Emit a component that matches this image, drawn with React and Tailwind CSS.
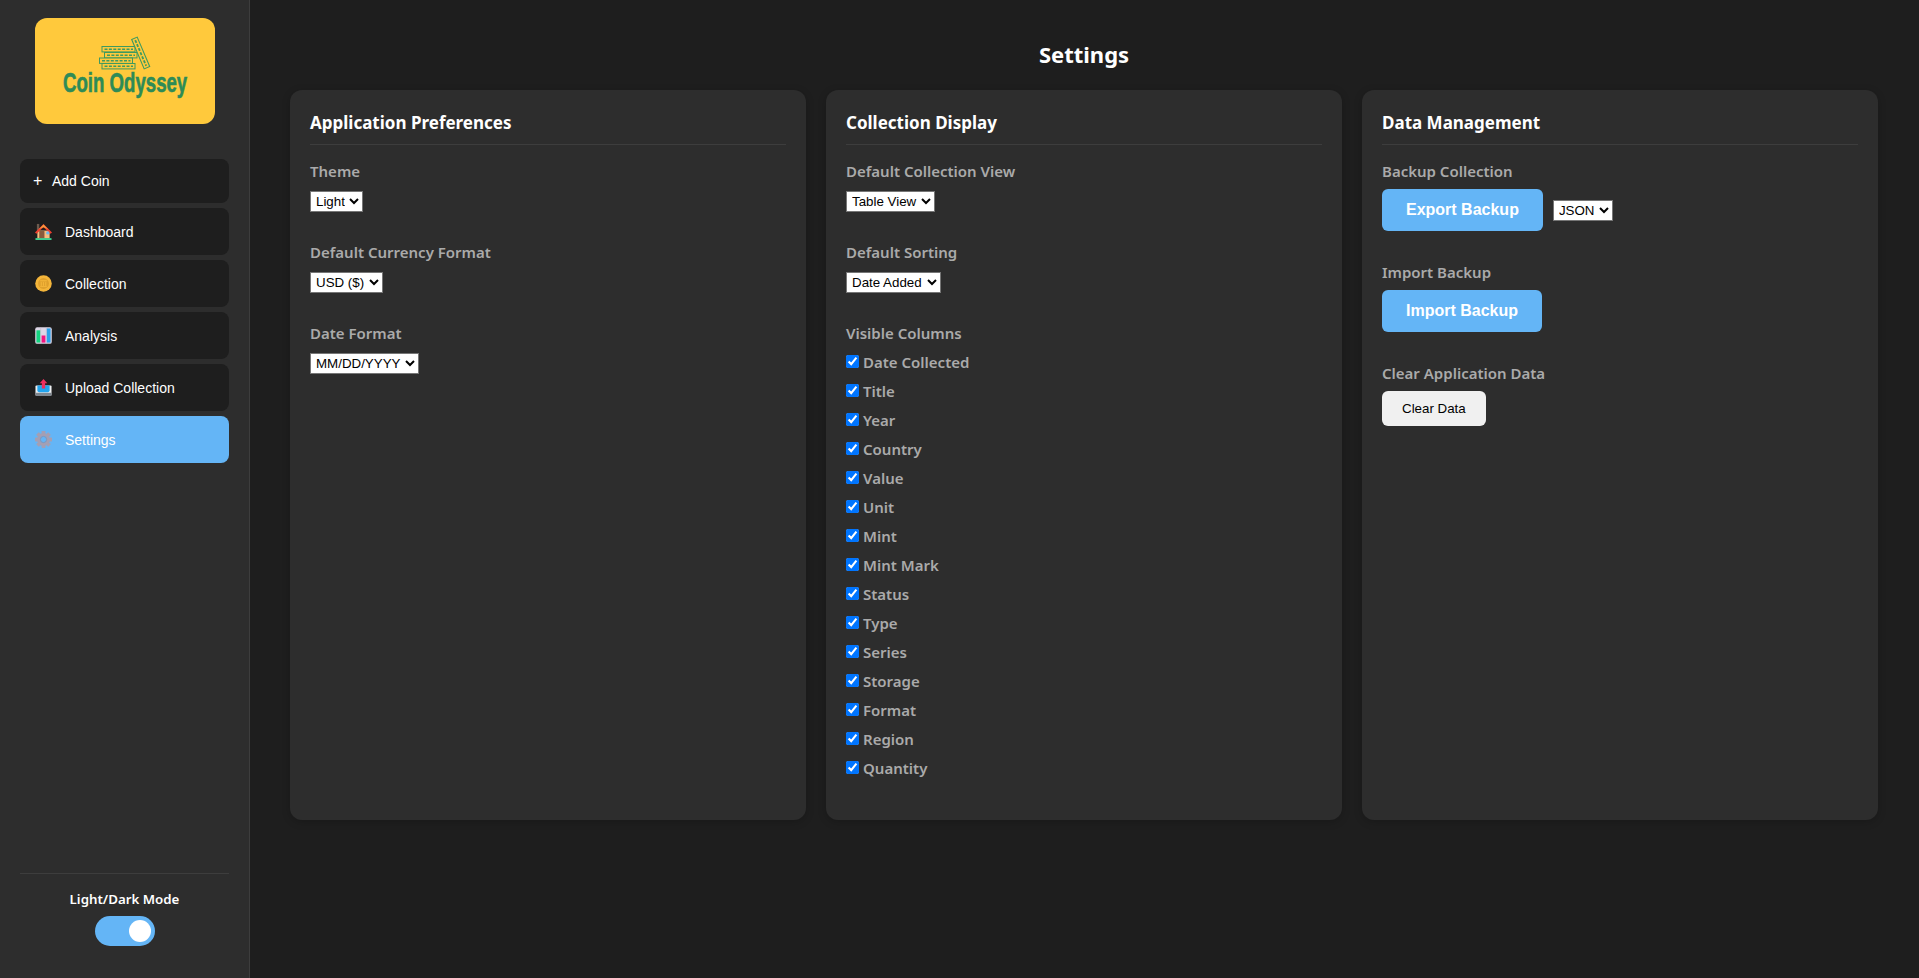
import { useState } from "react";

const HomeIcon = () => (
	<svg width="17" height="17" viewBox="0 0 36 36">
		<rect x="4" y="2" width="5" height="14" fill="#6b5a4e" />
		<rect x="5" y="16" width="26" height="17" fill="#f7bd7e" />
		<path d="M18 2 L0 20 L3 23 L18 9 L33 23 L36 20 Z" fill="#ef3f2f" />
		<path d="M18 3 L8 13 L18 9 L28 13 Z" fill="#f59a3b" />
		<rect x="9" y="17" width="11" height="16" fill="#8a5a3c" />
		<circle cx="27" cy="21" r="3.5" fill="#6db9ee" />
		<rect x="1" y="32" width="34" height="4" fill="#3fcf8e" />
	</svg>
);

const CoinIcon = () => (
	<svg width="17" height="17" viewBox="0 0 36 36">
		<circle cx="18" cy="18" r="17.5" fill="#f4b53a" />
		<circle cx="18" cy="18" r="11.5" fill="#dfa02c" />
		<rect x="11" y="11" width="14" height="2.5" fill="#f4b53a" />
		<rect x="12" y="15" width="2.5" height="8" fill="#f4b53a" />
		<rect x="16.7" y="15" width="2.5" height="8" fill="#f4b53a" />
		<rect x="21.5" y="15" width="2.5" height="8" fill="#f4b53a" />
		<rect x="11" y="23.5" width="14" height="2" fill="#f4b53a" />
	</svg>
);

const ChartIcon = () => (
	<svg width="17" height="17" viewBox="0 0 36 36">
		<rect x="0.5" y="0.5" width="35" height="35" rx="4" fill="#ddd6e6" />
		<path d="M12 0 V36 M24 0 V36" stroke="#bdb5c9" strokeWidth="1" />
		<rect x="3" y="7" width="8" height="26" fill="#14d37f" />
		<rect x="14" y="18" width="8" height="15" fill="#f4147f" />
		<rect x="25" y="3" width="8" height="30" fill="#2aa2ea" />
	</svg>
);

const UploadIcon = () => (
	<svg width="17" height="17" viewBox="0 0 36 36">
		<rect x="1" y="14" width="34" height="21" rx="2" fill="#eef0f2" />
		<rect x="1" y="29" width="34" height="7" rx="1" fill="#7f868e" />
		<path d="M5 14 H31 V24 Q31 28 27 28 H9 Q5 28 5 24 Z" fill="#22a4ee" />
		<path d="M18 0 L26 9 H21.5 V20 H14.5 V9 H10 Z" fill="#ef2f5f" />
	</svg>
);

const gearTeeth = [0, 45, 90, 135, 180, 225, 270, 315];

const GearIcon = () => (
	<svg width="17" height="17" viewBox="0 0 36 36">
		{gearTeeth.map((a) => (
			<rect key={a} x="14" y="0" width="8" height="10" rx="1" fill="#a39fb4" transform={`rotate(${a} 18 18)`} />
		))}
		<circle cx="18" cy="18" r="10.5" fill="none" stroke="#a39fb4" strokeWidth="6.5" />
		<circle cx="18" cy="18" r="6.6" fill="none" stroke="#8d8a9e" strokeWidth="1.5" />
	</svg>
);

const CoinRow = ({ x, y, w }) => (
	<g>
		<rect x={x} y={y} width={w} height="5.4" fill="#ffc93c" stroke="#3f9a5f" strokeWidth="1" />
		<line
			x1={x + 2.5}
			y1={y + 2.7}
			x2={x + w - 2}
			y2={y + 2.7}
			stroke="#3f9a5f"
			strokeWidth="1.5"
			strokeDasharray="3 1.4"
		/>
	</g>
);

const Logo = () => (
	<svg viewBox="0 0 180 106" className="block h-[106px] w-[180px] rounded-xl bg-[#ffc93c]">
		<CoinRow x={67} y={28.5} w={33} />
		<CoinRow x={69.5} y={34.5} w={32.5} />
		<CoinRow x={64.5} y={40} w={33} />
		<CoinRow x={67} y={45.5} w={33} />
		<g transform="translate(105.7 35) rotate(-23)">
			<rect x="-3" y="-16" width="6" height="32" fill="#ffc93c" stroke="#3f9a5f" strokeWidth="1.1" />
			<line x1="0" y1="-14" x2="0" y2="14" stroke="#3f9a5f" strokeWidth="1.8" strokeDasharray="3 1.4" />
		</g>
		<text
			transform="translate(28 73.5) scale(0.69 1)"
			fill="#2e8b57"
			stroke="#2e8b57"
			strokeWidth="0.6"
			fontFamily="Liberation Sans, sans-serif"
			fontWeight="700"
			fontSize="27"
		>
			Coin Odyssey
		</text>
	</svg>
);

const navItems = [
	{ label: "Dashboard", icon: <HomeIcon /> },
	{ label: "Collection", icon: <CoinIcon /> },
	{ label: "Analysis", icon: <ChartIcon /> },
	{ label: "Upload Collection", icon: <UploadIcon /> },
	{ label: "Settings", icon: <GearIcon />, active: true },
];

const columns = [
	"Date Collected",
	"Title",
	"Year",
	"Country",
	"Value",
	"Unit",
	"Mint",
	"Mint Mark",
	"Status",
	"Type",
	"Series",
	"Storage",
	"Format",
	"Region",
	"Quantity",
];

const selectClass =
	"block border border-[#767676] bg-white px-px py-px font-['Liberation_Sans'] text-[13.33px] text-black";

const Label = ({ children, className = "mb-2" }) => (
	<label className={`block text-[15px] leading-[21px] font-semibold text-[#aaaaaa] ${className}`}>
		{children}
	</label>
);

const SelectGroup = ({ label, options }) => (
	<div className="mb-[30px]">
		<Label className="mb-[9px]">{label}</Label>
		<select className={selectClass} defaultValue={options[0]}>
			{options.map((o) => (
				<option key={o}>{o}</option>
			))}
		</select>
	</div>
);

const Card = ({ title, children }) => (
	<section className="rounded-xl bg-[#2d2d2d] p-5 shadow-[0_2px_8px_rgba(0,0,0,0.2)]">
		<h2 className="mb-4 border-b border-[#3d3d3d] pt-px pb-[9px] text-[17px] leading-6 font-bold text-white">
			{title}
		</h2>
		{children}
	</section>
);

const App = () => {
	const [dark, setDark] = useState(true);

	return (
		<div className="flex h-screen bg-[#1e1e1e] font-['Noto_Sans',sans-serif] text-white">
			<aside className="flex w-[250px] shrink-0 flex-col border-r border-[#3d3d3d] bg-[#2d2d2d]">
				<div className="flex justify-center pt-[18px] pb-[35px]">
					<Logo />
				</div>
				<nav className="flex flex-col gap-[5px] px-5 font-['Liberation_Sans',sans-serif] text-sm">
					<button className="flex h-[44px] items-center rounded-lg bg-[#1e1e1e] pl-[13px] text-left text-white">
						<span className="mr-[10px] w-[9px] text-base leading-none">+</span>
						Add Coin
					</button>
					{navItems.map((item) => (
						<a
							key={item.label}
							className={`flex h-[47px] items-center gap-[13px] rounded-lg pl-[15px] text-white ${
								item.active ? "bg-[#64b5f6]" : "bg-[#1e1e1e]"
							}`}
						>
							{item.icon}
							{item.label}
						</a>
					))}
				</nav>
				<div className="mx-5 mt-auto flex flex-col items-center border-t border-[#3d3d3d] pt-[15px] pb-8">
					<span className="mb-[7px] text-[13.3px] leading-5 font-semibold text-white">
						Light/Dark Mode
					</span>
					<button
						onClick={() => setDark(!dark)}
						className={`flex h-[30px] w-[60px] items-center rounded-full px-1 ${
							dark ? "justify-end bg-[#64b5f6]" : "justify-start bg-gray-400"
						}`}
					>
						<span className="h-[22px] w-[22px] rounded-full bg-white" />
					</button>
				</div>
			</aside>

			<main className="flex-1 pt-[39px] pr-[41px] pl-10">
				<h1 className="mb-[21px] text-center text-[22px] leading-[30px] font-bold text-white">
					Settings
				</h1>
				<div className="grid grid-cols-3 gap-5">
					<Card title="Application Preferences">
						<SelectGroup label="Theme" options={["Light", "Dark"]} />
						<SelectGroup label="Default Currency Format" options={["USD ($)", "EUR (€)", "GBP (£)"]} />
						<SelectGroup label="Date Format" options={["MM/DD/YYYY", "DD/MM/YYYY", "YYYY-MM-DD"]} />
					</Card>

					<Card title="Collection Display">
						<SelectGroup label="Default Collection View" options={["Table View", "Grid View"]} />
						<SelectGroup label="Default Sorting" options={["Date Added", "Title", "Year"]} />
						<div className="mb-5">
							<Label className="mb-[6px]">Visible Columns</Label>
							<div className="flex flex-col gap-[5px]">
								{columns.map((c) => (
									<label
										key={c}
										className="flex h-6 items-center gap-1 text-[15px] font-semibold text-[#aaaaaa]"
									>
										<input type="checkbox" defaultChecked className="-mt-0.5" />
										{c}
									</label>
								))}
							</div>
						</div>
					</Card>

					<Card title="Data Management">
						<div className="mb-[31px]">
							<Label className="mb-[7px]">Backup Collection</Label>
							<div className="flex items-center gap-[10px]">
								<button className="h-[42px] rounded-md bg-[#64b5f6] px-6 font-['Liberation_Sans'] text-base font-bold text-white">
									Export Backup
								</button>
								<select className={selectClass} defaultValue="JSON">
									<option>JSON</option>
									<option>CSV</option>
								</select>
							</div>
						</div>
						<div className="mb-[31px]">
							<Label className="mb-[7px]">Import Backup</Label>
							<button className="h-[42px] rounded-md bg-[#64b5f6] px-6 font-['Liberation_Sans'] text-base font-bold text-white">
								Import Backup
							</button>
						</div>
						<div>
							<Label className="mb-[7px]">Clear Application Data</Label>
							<button className="h-[35px] rounded-md bg-[#f0f0f0] px-5 font-['Liberation_Sans'] text-[13.33px] text-black">
								Clear Data
							</button>
						</div>
					</Card>
				</div>
			</main>
		</div>
	);
};

export default App;
